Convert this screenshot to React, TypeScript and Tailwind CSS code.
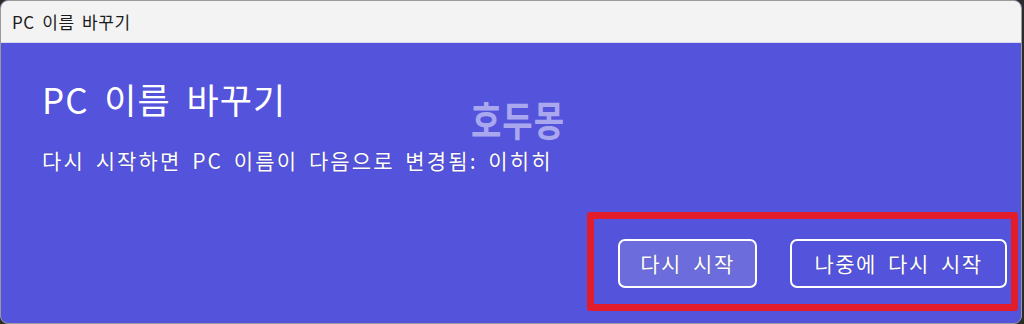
const font = { fontFamily: '"Noto Sans CJK KR", "Noto Sans", sans-serif' };

function DialogButton({ label, primary, width }: { label: string; primary?: boolean; width: string }) {
  return (
    <button
      className={`flex h-[49px] ${width} items-center justify-center rounded-[7px] border-2 border-white text-[21px] leading-none tracking-[1.5px] text-white [word-spacing:5px] [text-shadow:0_0_1px_rgba(0,0,0,0.35)] ${
        primary ? "bg-[#6d6cdc]" : "bg-transparent"
      }`}
    >
      {label}
    </button>
  );
}

export default function App() {
  return (
    <div className="h-[324px] w-[1024px] bg-[#2b2b2b]" style={font}>
      <div className="relative flex h-[324px] w-[1022px] flex-col overflow-hidden rounded-t-[8px] rounded-b-[8px] border border-[#9a9a9a] bg-[#5453db]">
        <div className="flex h-[42px] shrink-0 items-center border-b border-[#d9d9ee] bg-[#f3f3f3] px-[11px] text-[17px] tracking-[0.6px] text-[#1b1b1b] [word-spacing:3px]">
          PC 이름 바꾸기
        </div>

        <div className="flex flex-1 flex-col pl-[41px] pr-[14px] pb-[35px] pt-[36px] text-white">
          <h1 className="text-[35px] leading-[40px] font-normal tracking-[1px] [word-spacing:7px]">PC 이름 바꾸기</h1>
          <p className="mt-[27px] text-[21px] leading-[28px] tracking-[2.1px] [word-spacing:4px] [text-shadow:0_0_1px_rgba(0,0,0,0.35)]">
            다시 시작하면 PC 이름이 다음으로 변경됨: 이히히
          </p>

          <div className="mt-auto flex justify-end gap-[33px]">
            <DialogButton label="다시 시작" primary width="w-[139px]" />
            <DialogButton label="나중에 다시 시작" width="w-[217px]" />
          </div>
        </div>

        {/* watermark */}
        <div className="absolute left-[470px] top-[97px] origin-top scale-y-[1.25] text-[33px] font-bold leading-none tracking-[1px] text-[#a9a8ef]">
          호두몽
        </div>

        {/* annotation box */}
        <div className="absolute left-[586px] top-[211px] h-[99px] w-[431px] rounded-[3px] border-[7px] border-[#e11d2c]" />
      </div>
    </div>
  );
}
